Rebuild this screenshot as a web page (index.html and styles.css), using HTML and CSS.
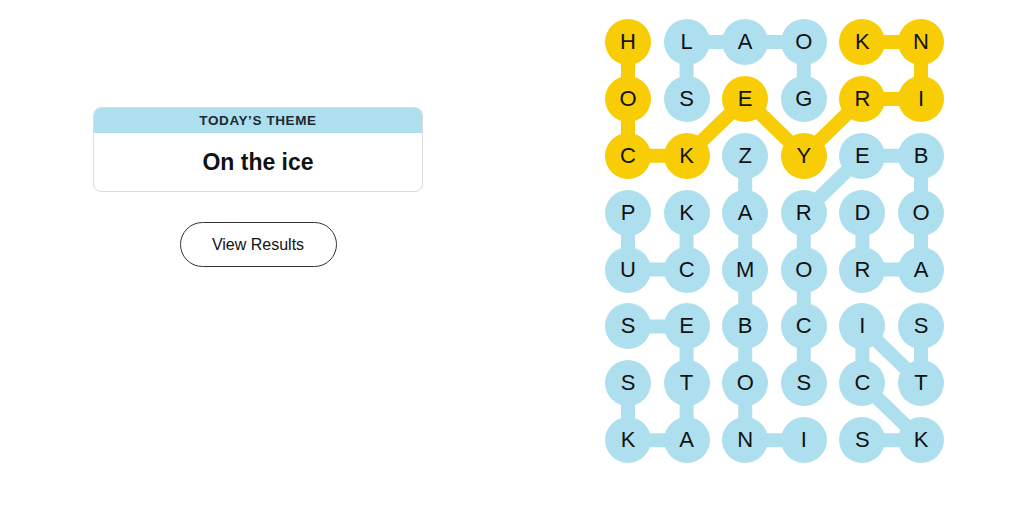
FILE: index.html
```html
<!DOCTYPE html>
<html lang="en">
<head>
<meta charset="utf-8">
<title>Strands</title>
<link rel="stylesheet" href="styles.css">
</head>
<body>
<main class="page">
  <section class="left">
    <div class="theme-card">
      <div class="theme-head">TODAY’S THEME</div>
      <div class="theme-body">On the ice</div>
    </div>
    <button class="results-btn">View Results</button>
  </section>
  <section class="board">
    <svg class="links" width="339" height="445" viewBox="0 0 339 445" aria-hidden="true">
      <g fill="none" stroke-width="14" stroke-linejoin="round" stroke-linecap="round">
        <polyline class="link-gold" points="23,23 23,79.9 23,136.8 81.6,136.8 140.2,79.9 198.8,136.8 257.4,79.9 316,79.9 316,23 257.4,23"/>
        <polyline class="link-blue" points="198.8,79.9 198.8,23 140.2,23 81.6,23 81.6,79.9"/>
        <polyline class="link-blue" points="198.8,364.4 198.8,307.5 198.8,250.6 198.8,193.7 257.4,136.8 316,136.8 316,193.7 316,250.6 257.4,250.6 257.4,193.7"/>
        <polyline class="link-blue" points="140.2,136.8 140.2,421.3 198.8,421.3"/>
        <polyline class="link-blue" points="23,193.7 23,250.6 81.6,250.6 81.6,193.7"/>
        <polyline class="link-blue" points="23,364.4 23,421.3 81.6,421.3 81.6,307.5 23,307.5"/>
        <polyline class="link-blue" points="316,307.5 316,364.4 257.4,307.5 257.4,364.4 316,421.3 257.4,421.3"/>
      </g>
    </svg>
    <div class="grid">
      <div class="cell gold">H</div><div class="cell">L</div><div class="cell">A</div><div class="cell">O</div><div class="cell gold">K</div><div class="cell gold">N</div>
      <div class="cell gold">O</div><div class="cell">S</div><div class="cell gold">E</div><div class="cell">G</div><div class="cell gold">R</div><div class="cell gold">I</div>
      <div class="cell gold">C</div><div class="cell gold">K</div><div class="cell">Z</div><div class="cell gold">Y</div><div class="cell">E</div><div class="cell">B</div>
      <div class="cell">P</div><div class="cell">K</div><div class="cell">A</div><div class="cell">R</div><div class="cell">D</div><div class="cell">O</div>
      <div class="cell">U</div><div class="cell">C</div><div class="cell">M</div><div class="cell">O</div><div class="cell">R</div><div class="cell">A</div>
      <div class="cell">S</div><div class="cell">E</div><div class="cell">B</div><div class="cell">C</div><div class="cell">I</div><div class="cell">S</div>
      <div class="cell">S</div><div class="cell">T</div><div class="cell">O</div><div class="cell">S</div><div class="cell">C</div><div class="cell">T</div>
      <div class="cell">K</div><div class="cell">A</div><div class="cell">N</div><div class="cell">I</div><div class="cell">S</div><div class="cell">K</div>
    </div>
  </section>
</main>
</body>
</html>
```
FILE: styles.css
```css
html, body {
  margin: 0;
  padding: 0;
  background: #ffffff;
}

body {
  width: 1024px;
  height: 512px;
  overflow: hidden;
  font-family: "Liberation Sans", Arial, sans-serif;
  color: #121212;
}

.page {
  display: flex;
  align-items: flex-start;
}

.left {
  width: 516px;
  display: flex;
  flex-direction: column;
  align-items: center;
  padding-top: 107px;
}

.theme-card {
  width: 330px;
  box-sizing: border-box;
  border: 1px solid #dcdcdc;
  border-radius: 8px;
  overflow: hidden;
  background: #fff;
}

.theme-head {
  background: #aedfee;
  height: 25px;
  display: flex;
  align-items: center;
  justify-content: center;
  font-size: 13.5px;
  font-weight: 700;
  letter-spacing: 0.6px;
  color: #1d2933;
}

.theme-body {
  height: 58px;
  display: flex;
  align-items: center;
  justify-content: center;
  font-size: 23px;
  font-weight: 700;
  color: #121212;
}

.results-btn {
  margin-top: 30px;
  width: 157px;
  height: 45px;
  box-sizing: border-box;
  border: 1.5px solid #333333;
  border-radius: 23px;
  background: #fff;
  font-family: "Liberation Sans", Arial, sans-serif;
  font-size: 16px;
  color: #121212;
  padding: 0;
}

.board {
  position: relative;
  margin-left: 89px;
  margin-top: 19px;
  width: 339px;
}

.links {
  position: absolute;
  left: 0;
  top: 0;
}

.link-gold {
  stroke: #f8cd05;
}

.link-blue {
  stroke: #aedfee;
}

.grid {
  position: relative;
  display: grid;
  grid-template-columns: repeat(6, 46px);
  grid-auto-rows: 46px;
  column-gap: 12.6px;
  row-gap: 10.9px;
}

.cell {
  width: 46px;
  height: 46px;
  border-radius: 50%;
  background: #aedfee;
  display: flex;
  align-items: center;
  justify-content: center;
  font-size: 22px;
  color: #121212;
}

.cell.gold {
  background: #f8cd05;
}
```
